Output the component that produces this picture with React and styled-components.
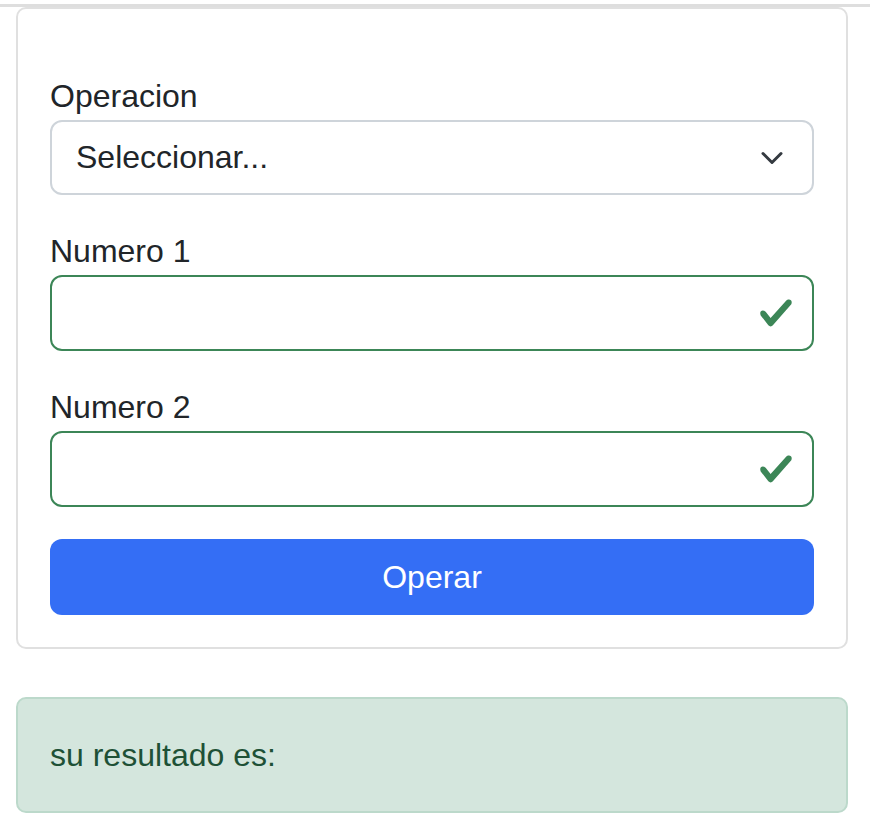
import React from "react";
import styled, { createGlobalStyle } from "styled-components";

const Global = createGlobalStyle`
  html, body { margin: 0; padding: 0; background: #fff; }
  body {
    font-family: "Liberation Sans", Arial, sans-serif;
    color: #212529;
    -webkit-font-smoothing: antialiased;
  }
  * { box-sizing: border-box; }
`;

const TopRule = styled.div`
  margin-top: 4px;
  height: 3px;
  background: #dedede;
`;

const Container = styled.div`
  padding: 0 22px 24px 16px;
`;

const Card = styled.div`
  border: 2px solid #e0e0e0;
  border-radius: 10px;
  background: #fff;
  padding: 63px 32px 32px 32px;
`;

const Group = styled.div`
  margin-bottom: 32px;
`;

const Label = styled.label`
  display: block;
  font-size: 32px;
  line-height: 48px;
  color: #212529;
`;

const SelectBox = styled.div`
  height: 75px;
  border: 2px solid #ced4da;
  border-radius: 12px;
  padding: 0 72px 0 24px;
  display: flex;
  align-items: center;
  font-size: 32px;
  color: #212529;
  position: relative;
`;

const Chevron = styled.svg`
  position: absolute;
  right: 24px;
  top: 50%;
  transform: translateY(-50%);
  width: 32px;
  height: 24px;
`;

const InputBox = styled.div`
  height: 76px;
  border: 2px solid ${(p) => (p.$valid ? "#3c8657" : "#ced4da")};
  border-radius: 12px;
  position: relative;
`;

const Check = styled.svg`
  position: absolute;
  right: 18px;
  top: 50%;
  transform: translateY(-50%);
  width: 36px;
  height: 36px;
`;

const Button = styled.button`
  display: block;
  width: 100%;
  height: 76px;
  border: none;
  border-radius: 12px;
  background: #346ef5;
  color: #fff;
  font-family: "Liberation Sans", Arial, sans-serif;
  font-size: 32px;
  line-height: 48px;
  cursor: pointer;
`;

const Alert = styled.div`
  margin-top: 48px;
  border: 2px solid #bcd9cb;
  border-radius: 10px;
  background: #d4e6dd;
  color: #1e5136;
  padding: 32px 32px;
  font-size: 32px;
  line-height: 48px;
  min-height: 114px;
`;

function ValidIcon() {
  return (
    <Check viewBox="0 0 8 8">
      <path
        fill="#3c8657"
        d="M2.3 6.73.6 4.53c-.4-1.04.46-1.4 1.1-.8l1.1 1.4 3.4-3.8c.6-.63 1.6-.27 1.2.7l-4 4.6c-.43.5-.8.4-1.1.1z"
      />
    </Check>
  );
}

export default function App() {
  return (
    <>
      <Global />
      <TopRule />
      <Container>
        <Card>
          <Group>
            <Label>Operacion</Label>
            <SelectBox>
              <span>Seleccionar...</span>
              <Chevron viewBox="0 0 16 16">
                <path
                  fill="none"
                  stroke="#343a40"
                  strokeLinecap="round"
                  strokeLinejoin="round"
                  strokeWidth="2"
                  d="m2 5 6 6 6-6"
                />
              </Chevron>
            </SelectBox>
          </Group>
          <Group>
            <Label>Numero 1</Label>
            <InputBox $valid>
              <ValidIcon />
            </InputBox>
          </Group>
          <Group>
            <Label>Numero 2</Label>
            <InputBox $valid>
              <ValidIcon />
            </InputBox>
          </Group>
          <Button>Operar</Button>
        </Card>
        <Alert>su resultado es:</Alert>
      </Container>
    </>
  );
}
